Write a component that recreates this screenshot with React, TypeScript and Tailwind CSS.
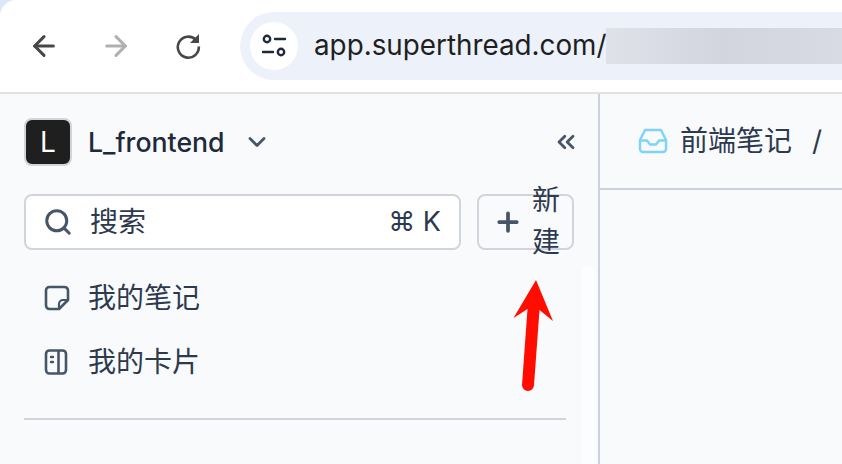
import { ArrowLeft, ArrowRight, ChevronDown, ChevronsLeft, Plus, Search } from 'lucide-react'

const cjk = "font-['Inter','Noto_Sans_CJK_SC',sans-serif]"

function NoteIcon() {
  return (
    <svg width="26" height="26" viewBox="0 0 26 26" fill="none" stroke="#475569" strokeWidth="2.6" strokeLinejoin="round" strokeLinecap="round">
      <path d="M15 24H5.500A3.500 3.500 0 0 1 2 20.500V5.500A3.500 3.500 0 0 1 5.500 2h15A3.500 3.500 0 0 1 24 5.500V15z" />
      <path d="M24 15h-5a4 4 0 0 0-4 4v5" strokeWidth="2.200" />
    </svg>
  )
}

function CardIcon() {
  return (
    <svg width="24" height="26" viewBox="0 0 24 26" fill="none" stroke="#475569" strokeWidth="2.6">
      <rect x="2" y="1.500" width="20" height="23" rx="3.500" />
      <path d="M14.500 1.500v23" />
      <path d="M7 8h2M7 13h2" strokeWidth="2.400" strokeLinecap="round" />
    </svg>
  )
}

function InboxIcon() {
  return (
    <svg width="30" height="26" viewBox="0 0 30 26" fill="none" stroke="#7dd3fc" strokeWidth="2.400" strokeLinejoin="round" strokeLinecap="round">
      <path d="M7 2h16l5 10v9a3 3 0 0 1-3 3H5a3 3 0 0 1-3-3v-9z" />
      <path d="M2 12.500h7l3 4h6l3-4h7" />
    </svg>
  )
}

function TuneIcon() {
  return (
    <svg width="26" height="26" viewBox="0 0 26 26" fill="none" stroke="#1f2937" strokeWidth="2.400" strokeLinecap="round">
      <circle cx="6" cy="6" r="3.200" />
      <path d="M14 6h10" />
      <path d="M2 19h10" />
      <circle cx="20" cy="19" r="3.200" />
    </svg>
  )
}

function ReloadIcon() {
  return (
    <svg className="ml-[43px]" width="26" height="26" viewBox="0 0 26 26" fill="none">
      <path d="M21 7A10.500 10.500 0 1 0 23.800 13.500" stroke="#474747" strokeWidth="2.600" />
      <path d="M15 10h9V1z" fill="#474747" />
    </svg>
  )
}

export default function App() {
  return (
    <div className={`relative flex h-[464px] w-[842px] flex-col overflow-hidden bg-white ${cjk}`}>
      {/* browser toolbar */}
      <div className="h-[94px] shrink-0 bg-[#dbe7fb]">
        <div className="flex h-full items-center rounded-tl-[16px] border-b-2 border-[#e2e2e2] bg-white">
          <div className="flex w-[240px] shrink-0 items-center">
            <ArrowLeft className="ml-[28px] text-[#474747]" size={32} strokeWidth={2.300} />
            <ArrowRight className="ml-[40px] text-[#b0b0b0]" size={32} strokeWidth={2.300} />
            <ReloadIcon />
          </div>
          <div className="flex h-[68px] flex-1 items-center rounded-l-[34px] bg-[#ecf1fa] pl-[10px]">
            <div className="flex h-[48px] w-[48px] items-center justify-center rounded-full bg-white">
              <TuneIcon />
            </div>
            <span className="ml-[16px] font-['Inter'] text-[27.800px] leading-none text-[#1f1f1f]">app.superthread.com/</span>
            <div className="h-[36px] flex-1 bg-gradient-to-r from-[#dfe2e9] via-[#d2d5de] to-[#d8dbe3]" />
          </div>
        </div>
      </div>

      <div className="flex min-h-0 flex-1 bg-[#f9fafc]">
        {/* sidebar */}
        <aside className="relative w-[600px] shrink-0 border-r-2 border-[#cbd2dc] pl-[24px] pr-[24px]">
          <div className="flex h-[96px] items-center">
            <div className="flex h-[48px] w-[48px] items-center justify-center rounded-[8px] border-2 border-[#d1d5db] bg-[#1f1f1f] text-[28px] text-white">
              L
            </div>
            <span className="ml-[16px] text-[26.700px] font-medium text-[#1e293b]">L_frontend</span>
            <ChevronDown className="ml-[18px] text-[#475569]" size={28} strokeWidth={2.400} />
            <ChevronsLeft className="ml-auto mr-[-6px] text-[#475569]" size={28} strokeWidth={2.400} />
          </div>

          <div className="mt-[4px] flex items-start gap-[16px]">
            <div className="flex h-[56px] w-[437px] items-center rounded-[8px] border-2 border-[#d1d5db] bg-white pl-[17px] pr-[18px]">
              <Search className="text-[#475569]" size={30} strokeWidth={2.400} />
              <span className="ml-[17px] text-[28px] text-[#2d3a4e]">搜索</span>
              <span className="ml-auto text-[27px] text-[#2d3a4e]">⌘ K</span>
            </div>
            <div className="flex h-[56px] w-[97px] items-center rounded-[8px] border-2 border-[#d1d5db] pl-[14px]">
              <Plus className="text-[#475569]" size={30} strokeWidth={3} />
              <span className="ml-[9px] mt-[-2px] w-[28px] text-[28px] leading-[42px] text-[#2d3a4e]">新建</span>
            </div>
          </div>

          <div className="mt-[16px] flex h-[64px] items-center pl-[20px]">
            <NoteIcon />
            <span className="ml-[18px] text-[28px] text-[#2d3a4e]">我的笔记</span>
          </div>
          <div className="flex h-[64px] items-center pl-[20px]">
            <CardIcon />
            <span className="ml-[20px] text-[28px] text-[#2d3a4e]">我的卡片</span>
          </div>

          <div className="mr-[8px] mt-[24px] h-[2px] bg-[#d1d5db]" />

          {/* faint scrollbar track */}
          <div className="absolute bottom-0 right-[4px] top-[172px] w-[12px] rounded-t-[6px] bg-[#fcfdfe]" />
        </aside>

        {/* content */}
        <main className="flex-1">
          <div className="flex h-[96px] items-center border-b-2 border-[#cbd2dc] pl-[38px]">
            <InboxIcon />
            <span className="ml-[12px] text-[28px] text-[#2d3a4e]">前端笔记</span>
            <span className="ml-[20px] text-[28px] text-[#2d3a4e]">/</span>
          </div>
        </main>
      </div>

      {/* annotation arrow */}
      <svg className="absolute left-[500px] top-[270px]" width="70" height="130" viewBox="500 270 70 130">
        <path d="M536 280L553 321L539.500 310L534 385A6 6 0 0 1 522 385L527.500 309L513.500 318z" fill="#ff0d00" />
      </svg>
    </div>
  )
}
